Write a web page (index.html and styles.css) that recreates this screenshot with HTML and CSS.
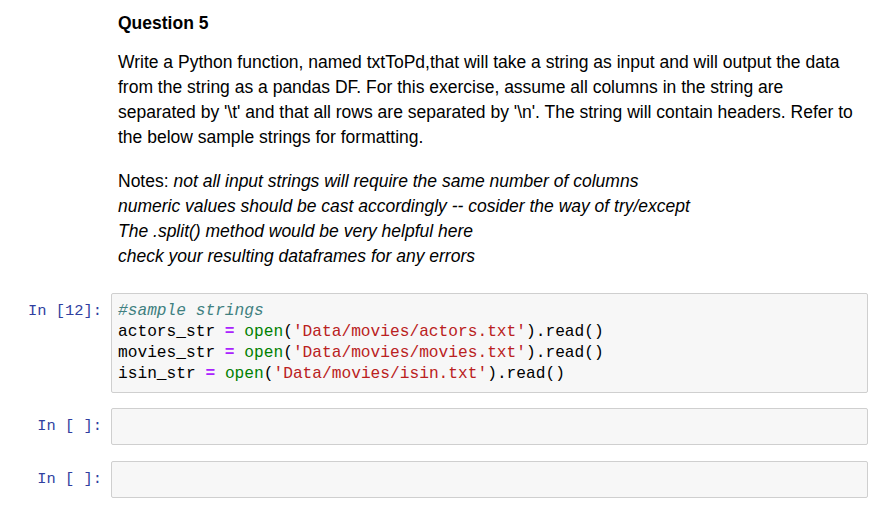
FILE: index.html
```html
<!DOCTYPE html>
<html>
<head>
<meta charset="utf-8">
<link rel="stylesheet" href="styles.css">
</head>
<body>
<div class="notebook">
  <div class="cell text-cell">
    <div class="prompt"></div>
    <div class="rendered">
      <h4 class="heading">Question 5</h4>
      <p class="para">Write a Python function, named txtToPd,that will take a string as input and will output the data from the string as a pandas DF. For this exercise, assume all columns in the string are separated by '\t' and that all rows are separated by '\n'. The string will contain headers. Refer to the below sample strings for formatting.</p>
      <p class="para notes">Notes: <em>not all input strings will require the same number of columns<br>numeric values should be cast accordingly -- cosider the way of try/except<br>The .split() method would be very helpful here<br>check your resulting dataframes for any errors</em></p>
    </div>
  </div>

  <div class="cell code-cell first-code">
    <div class="prompt">In&nbsp;[12]:</div>
    <div class="input"><pre class="code"><span class="c">#sample strings</span>
actors_str <span class="o">=</span> <span class="b">open</span>(<span class="s">'Data/movies/actors.txt'</span>).read()
movies_str <span class="o">=</span> <span class="b">open</span>(<span class="s">'Data/movies/movies.txt'</span>).read()
isin_str <span class="o">=</span> <span class="b">open</span>(<span class="s">'Data/movies/isin.txt'</span>).read()</pre></div>
  </div>

  <div class="cell code-cell">
    <div class="prompt">In&nbsp;[&nbsp;]:</div>
    <div class="input"><pre class="code"> </pre></div>
  </div>

  <div class="cell code-cell last-code">
    <div class="prompt">In&nbsp;[&nbsp;]:</div>
    <div class="input"><pre class="code"> </pre></div>
  </div>
</div>
</body>
</html>
```

FILE: styles.css
```css
html, body {
  margin: 0;
  padding: 0;
  background: #ffffff;
}

body {
  width: 885px;
  height: 507px;
  overflow: hidden;
  font-family: "Liberation Sans", Arial, sans-serif;
  color: #000000;
}

.notebook {
  display: flex;
  flex-direction: column;
  padding-top: 13px;
}

.cell {
  display: flex;
  align-items: flex-start;
}

.prompt {
  width: 102px;
  flex: none;
  text-align: right;
  font-family: "Liberation Mono", "DejaVu Sans Mono", monospace;
  font-size: 15.4px;
  line-height: 21px;
  color: #303f9f;
  padding-top: 8px;
  margin-right: 9px;
}

.text-cell .prompt {
  width: 118px;
  margin-right: 0;
}

.rendered {
  flex: 1;
  padding-right: 20px;
}

.heading {
  margin: 0;
  font-size: 17.5px;
  line-height: 20px;
  font-weight: bold;
}

.para {
  margin: 16.5px 0 0 0;
  font-size: 17.5px;
  line-height: 25px;
}

.notes {
  margin-top: 19px;
}

.notes em {
  font-style: italic;
}

.code-cell {
  margin-top: 15px;
}

.first-code {
  margin-top: 24px;
}

.last-code {
  margin-top: 16px;
}

.input {
  flex: none;
  width: 757px;
  box-sizing: border-box;
  background: #f7f7f7;
  border: 1px solid #cfcfcf;
  border-radius: 2px;
  padding: 7px 6px;
}

.code {
  margin: 0;
  font-family: "Liberation Mono", "DejaVu Sans Mono", monospace;
  font-size: 16.2px;
  line-height: 21px;
  color: #000000;
  white-space: pre;
}

.c { color: #408080; font-style: italic; }
.o { color: #aa22ff; font-weight: bold; }
.b { color: #008000; }
.s { color: #ba2121; }
```
